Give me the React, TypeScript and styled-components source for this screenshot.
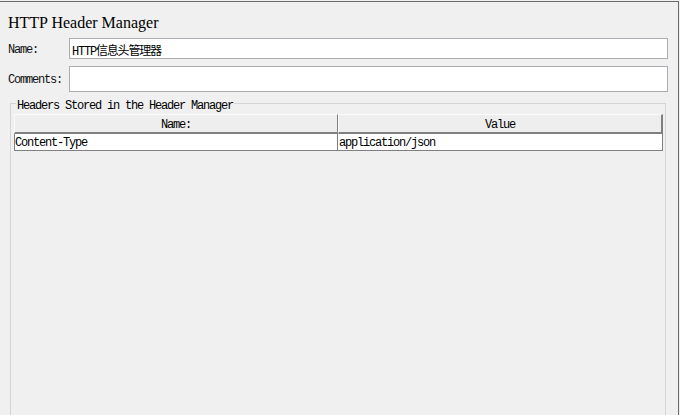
import React from "react";
import styled, { createGlobalStyle } from "styled-components";

const GlobalStyle = createGlobalStyle`
  html, body {
    margin: 0;
    padding: 0;
    background: #f0f0f0;
  }
  * { box-sizing: border-box; }
`;

const mono = `"Liberation Mono", "DejaVu Sans Mono", "Noto Sans CJK SC", monospace`;

const Page = styled.div`
  width: 680px;
  height: 415px;
  overflow: hidden;
  background: #f0f0f0;
  padding-top: 1px;
`;

const Panel = styled.div`
  width: 679px;
  height: 430px;
  border-top: 1px solid #6b6b6b;
  border-right: 1px solid #6b6b6b;
  padding: 0 10px 0 8px;
  display: flex;
  flex-direction: column;
`;

const Title = styled.div`
  margin-top: 12px;
  font-family: "Liberation Serif", "Noto Sans CJK SC", serif;
  font-size: 16px;
  line-height: 17px;
  color: #000;
`;

const FormRow = styled.div<{ $gap: number }>`
  display: grid;
  grid-template-columns: 61px 1fr;
  align-items: center;
  margin-top: ${(p) => p.$gap}px;
`;

const Label = styled.label`
  font-family: ${mono};
  font-size: 12px;
  letter-spacing: -1.2px;
  line-height: 14px;
  padding-top: 2px;
  color: #111;
`;

const TextField = styled.input<{ $h: number }>`
  height: ${(p) => p.$h}px;
  width: 100%;
  margin: 0;
  border: 1px solid #acacb2;
  background: #fff;
  padding: 2px 2px 0 2px;
  font-family: ${mono};
  font-size: 12px;
  letter-spacing: -1.2px;
  color: #000;
  outline: none;
`;

const Group = styled.fieldset`
  margin: 1px 2px 0 2px;
  padding: 1px 2px 0 3px;
  border: 1px solid #d4d4d4;
  min-width: 0;
  flex: 1;
`;

const Legend = styled.legend`
  margin-left: 2px;
  padding: 6px 1px 0 1px;
  font-family: ${mono};
  font-size: 12px;
  letter-spacing: -1.2px;
  line-height: 14px;
  color: #000;
`;

const Table = styled.div`
  display: grid;
  grid-template-columns: 324px 1fr;
`;

const HeaderCell = styled.div<{ $last?: boolean }>`
  height: 20px;
  background: #eeeeee;
  border-top: 1px solid #fbfbfb;
  border-left: 1px solid #fbfbfb;
  border-right: ${(p) => (p.$last ? 2 : 1)}px solid #808080;
  border-bottom: 2px solid #808080;
  padding-top: 3px;
  text-align: center;
  font-family: ${mono};
  font-size: 12px;
  letter-spacing: -1.2px;
  line-height: 14px;
  color: #000;
`;

const Cell = styled.div<{ $first?: boolean }>`
  height: 17px;
  background: #fff;
  border-left: ${(p) => (p.$first ? "1px solid #808080" : "none")};
  border-right: 1px solid #808080;
  border-bottom: 1px solid #808080;
  padding: 2px 0 0 ${(p) => (p.$first ? 0 : 1)}px;
  font-family: ${mono};
  font-size: 12px;
  letter-spacing: -1.2px;
  line-height: 14px;
  color: #000;
  white-space: nowrap;
  overflow: hidden;
`;

const headers = [{ name: "Content-Type", value: "application/json" }];

export default function App() {
  return (
    <Page>
      <GlobalStyle />
      <Panel>
        <Title>HTTP Header Manager</Title>
        <FormRow $gap={7}>
          <Label>Name:</Label>
          <TextField $h={21} defaultValue="HTTP信息头管理器" />
        </FormRow>
        <FormRow $gap={7}>
          <Label>Comments:</Label>
          <TextField $h={26} defaultValue="" />
        </FormRow>
        <Group>
          <Legend>Headers Stored in the Header Manager</Legend>
          <Table>
            <HeaderCell>Name:</HeaderCell>
            <HeaderCell $last>Value</HeaderCell>
            {headers.map((h) => (
              <React.Fragment key={h.name}>
                <Cell $first>{h.name}</Cell>
                <Cell>{h.value}</Cell>
              </React.Fragment>
            ))}
          </Table>
        </Group>
      </Panel>
    </Page>
  );
}
